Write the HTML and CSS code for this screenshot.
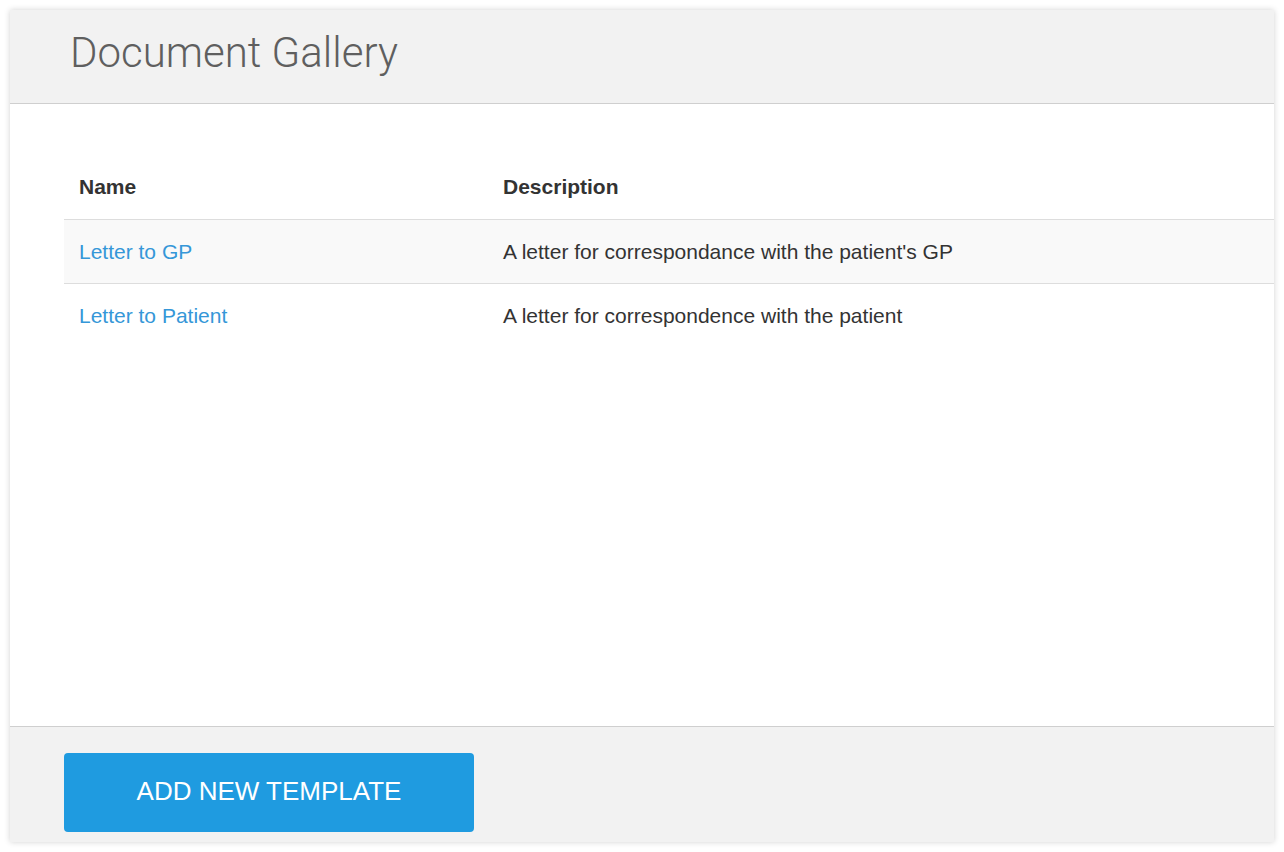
FILE: index.html
```html
<!DOCTYPE html>
<html lang="en">
<head>
<meta charset="utf-8">
<title>Document Gallery</title>
<link rel="stylesheet" href="styles.css">
</head>
<body>
<div class="card">
  <header class="card-header">
    <h1 class="title">Document Gallery</h1>
  </header>
  <main class="card-body">
    <table class="gallery">
      <colgroup>
        <col class="col-name">
        <col>
      </colgroup>
      <thead>
        <tr><th>Name</th><th>Description</th></tr>
      </thead>
      <tbody>
        <tr class="striped"><td><a href="#" class="link">Letter to GP</a></td><td>A letter for correspondance with the patient's GP</td></tr>
        <tr><td><a href="#" class="link">Letter to Patient</a></td><td>A letter for correspondence with the patient</td></tr>
      </tbody>
    </table>
  </main>
  <footer class="card-footer">
    <button class="btn-primary" type="button">ADD NEW TEMPLATE</button>
  </footer>
</div>
</body>
</html>
```
FILE: styles.css
```css
html, body {
  margin: 0;
  padding: 0;
  background: #ffffff;
}
body {
  padding: 10px;
  font-family: "Liberation Sans", Arial, sans-serif;
  color: #333333;
}
.card {
  height: 832px;
  width: 1264px;
  display: flex;
  flex-direction: column;
  background: #ffffff;
  box-shadow: 0 0 6px rgba(0, 0, 0, 0.18);
}
.card-header {
  height: 94px;
  background: #f2f2f2;
  border-bottom: 1px solid #cfcfcf;
  padding: 22px 0 0 60px;
  box-sizing: border-box;
  flex: 0 0 auto;
}
.title {
  margin: 0;
  font-family: Roboto, "Liberation Sans", sans-serif;
  font-weight: 300;
  font-size: 42px;
  line-height: 42px;
  color: #5f5f5f;
}
.card-body {
  flex: 1 1 auto;
  padding: 51px 0 0 54px;
}
.gallery {
  width: 100%;
  border-collapse: collapse;
  font-size: 21px;
}
.col-name {
  width: 424px;
}
.gallery th,
.gallery td {
  text-align: left;
  padding: 0 15px;
  vertical-align: middle;
}
.gallery th {
  height: 64px;
  font-weight: bold;
  color: #333333;
  border-bottom: 1px solid #dddddd;
}
.gallery td {
  height: 63px;
  color: #333333;
  border-bottom: 1px solid #dddddd;
}
.gallery tbody tr:last-child td {
  border-bottom: none;
}
.striped td {
  background: #f9f9f9;
}
.link {
  color: #3597d8;
  text-decoration: none;
}
.card-footer {
  flex: 0 0 auto;
  height: 116px;
  box-sizing: border-box;
  background: #f2f2f2;
  border-top: 1px solid #cfcfcf;
  padding: 26px 0 0 54px;
}
.btn-primary {
  width: 410px;
  height: 79px;
  border: none;
  border-radius: 4px;
  background: #1f9be0;
  color: #ffffff;
  font-family: "Liberation Sans", Arial, sans-serif;
  font-size: 26px;
  cursor: pointer;
  padding: 0 0 3px;
}
```
